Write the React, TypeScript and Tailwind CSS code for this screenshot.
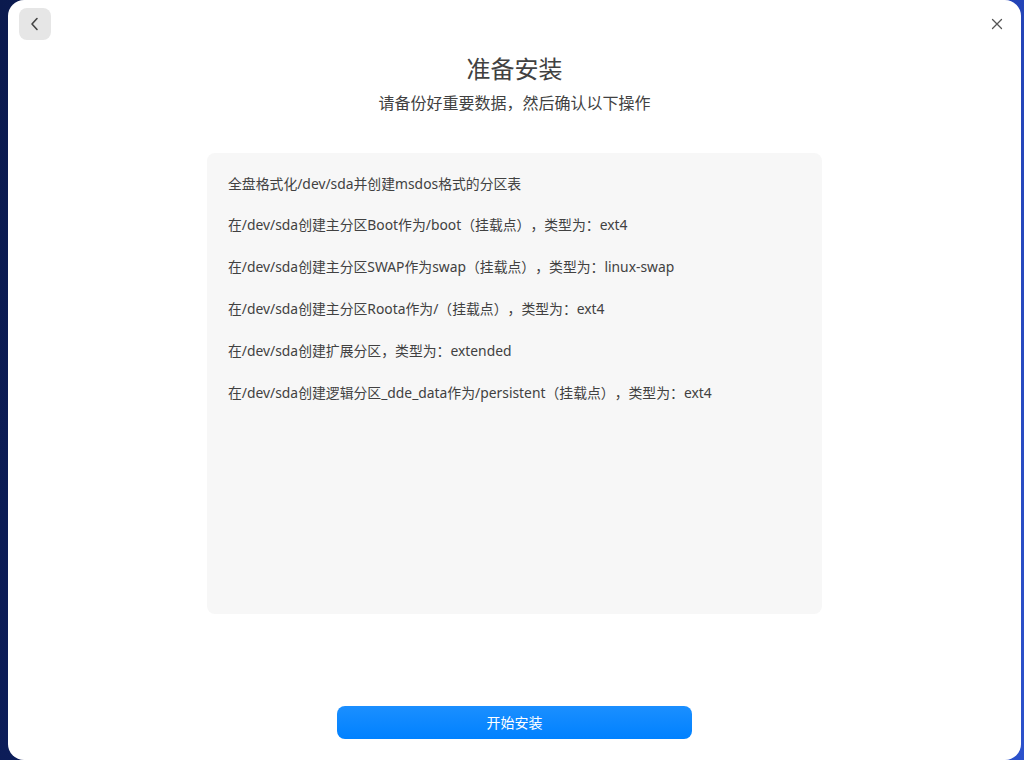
import React from "react";

const lines = [
  "全盘格式化/dev/sda并创建msdos格式的分区表",
  "在/dev/sda创建主分区Boot作为/boot（挂载点），类型为：ext4",
  "在/dev/sda创建主分区SWAP作为swap（挂载点），类型为：linux-swap",
  "在/dev/sda创建主分区Roota作为/（挂载点），类型为：ext4",
  "在/dev/sda创建扩展分区，类型为：extended",
  "在/dev/sda创建逻辑分区_dde_data作为/persistent（挂载点），类型为：ext4",
];

export default function App() {
  return (
    <div
      className="w-[1024px] h-[760px] flex pl-[8px] pr-[3px] overflow-hidden bg-[linear-gradient(100deg,#0b1a4e_0%,#0f2470_40%,#1d3aa8_80%,#2c52cc_100%)] [text-spacing-trim:space-all]"
      style={{ fontFamily: '"Noto Sans CJK SC", "Noto Sans", sans-serif' }}
    >
      <div className="flex-1 bg-white rounded-[16px] flex flex-col items-center">
        <div className="w-full flex justify-between items-start pt-[8px] pl-[11px] pr-[18px] h-[40px]">
          <button className="w-[32px] h-[32px] rounded-[8px] bg-[#e6e6e6] flex items-center justify-center">
            <svg width="12" height="14" viewBox="0 0 12 14" fill="none">
              <path d="M8 1.5L3 7l5 5.5" stroke="#444" strokeWidth="1.6" strokeLinecap="round" strokeLinejoin="round" />
            </svg>
          </button>
          <div className="pt-[10px]">
            <svg width="12" height="12" viewBox="0 0 12 12" fill="none">
              <path d="M1.5 1.5l9 9M10.5 1.5l-9 9" stroke="#555" strokeWidth="1.3" strokeLinecap="round" />
            </svg>
          </div>
        </div>
        <div className="mt-[12px] text-[24px] leading-[32px] text-[#414141]">准备安装</div>
        <div className="mt-[7px] text-[16px] leading-[22px] text-[#414141]">
          请备份好重要数据，然后确认以下操作
        </div>
        <div className="mt-[40px] w-[615px] h-[461px] bg-[#f7f7f7] rounded-[8px] pt-[10px] pl-[21px] flex flex-col">
          {lines.map((l) => (
            <div
              key={l}
              className="h-[41.8px] flex items-center text-[13.85px] text-[#414141]"
              style={{ fontFamily: '"Noto Sans", "Noto Sans CJK SC", sans-serif' }}
            >
              {l}
            </div>
          ))}
        </div>
        <button className="mt-[92px] w-[355px] h-[33px] rounded-[8px] bg-[linear-gradient(180deg,#1b8fff,#0081ff)] text-white text-[14px] flex items-center justify-center">
          开始安装
        </button>
      </div>
    </div>
  );
}
